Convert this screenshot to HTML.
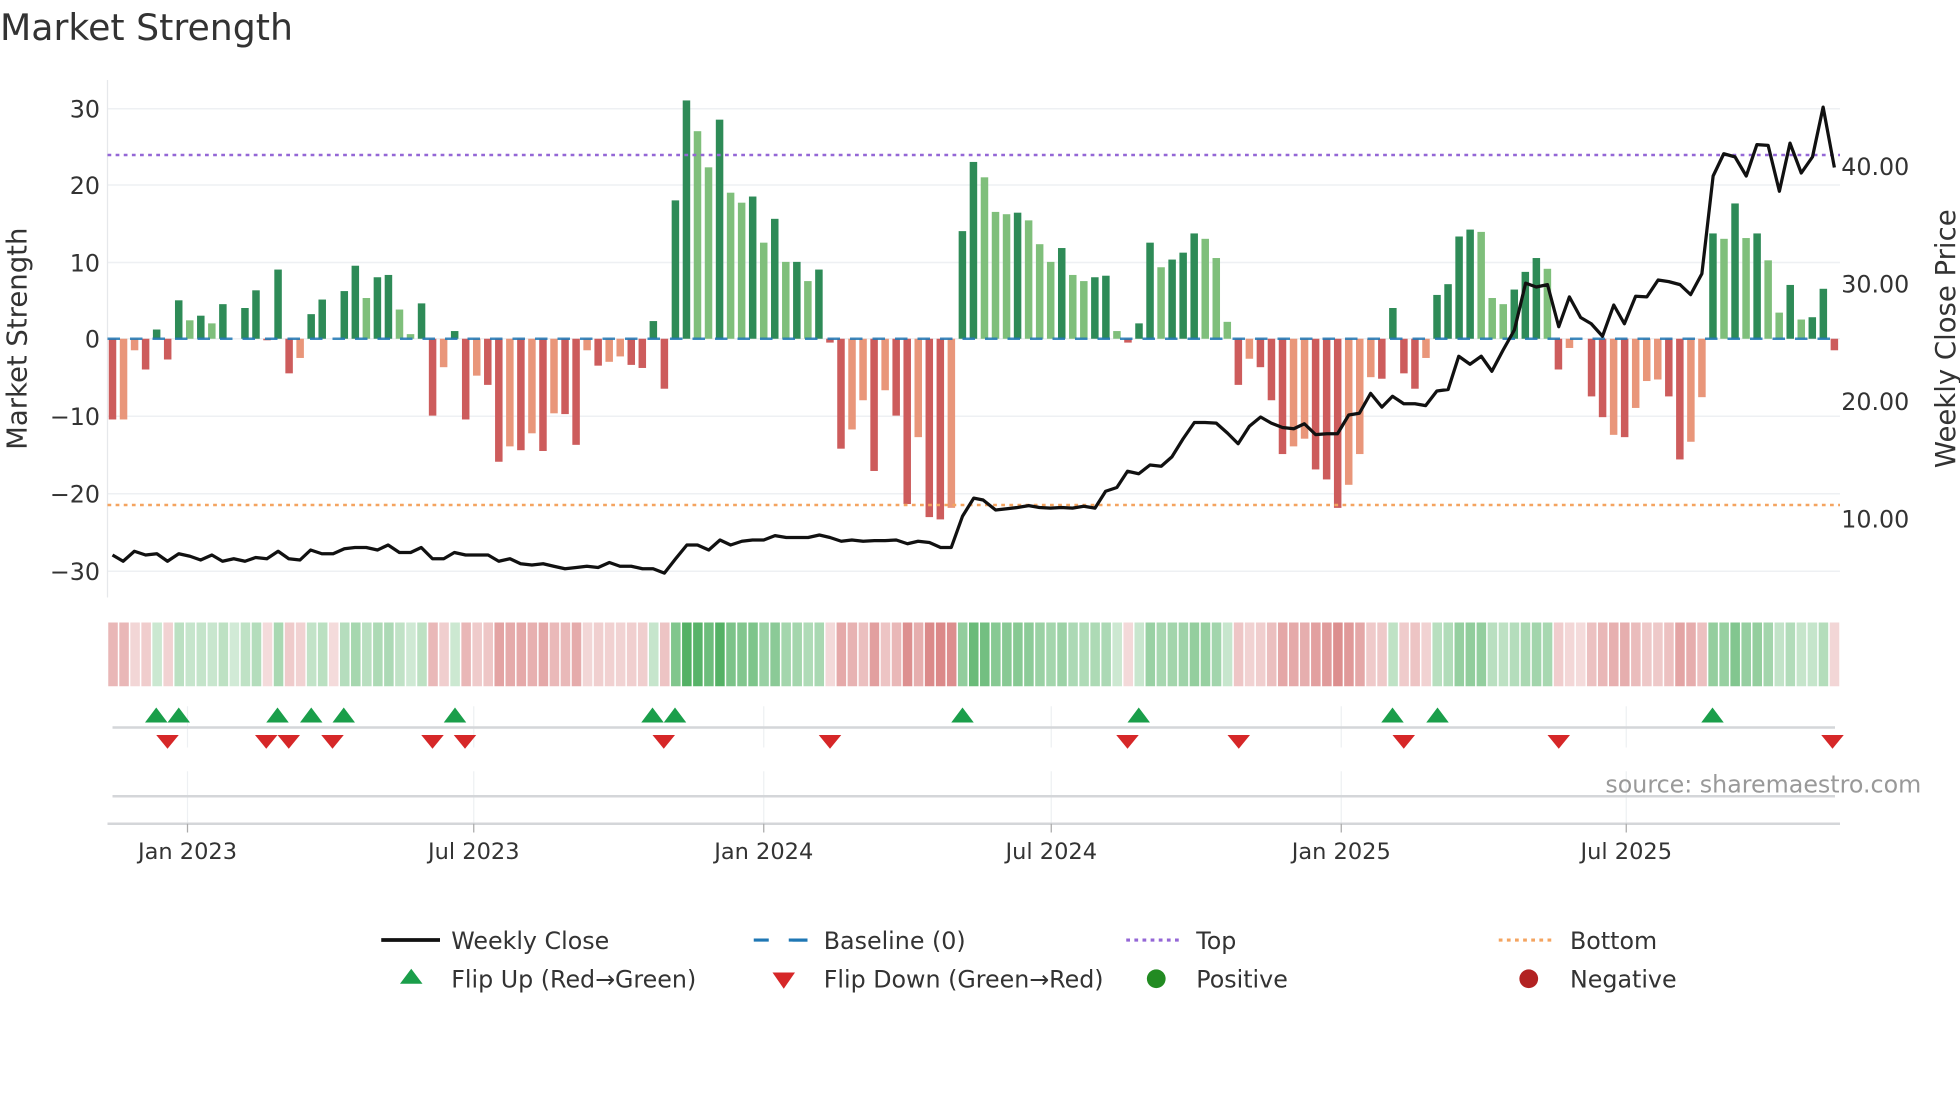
<!DOCTYPE html>
<html><head><meta charset="utf-8"><style>
html,body{margin:0;padding:0;background:#fff;width:1960px;height:1102px;overflow:hidden}
svg{display:block}
text{font-family:"DejaVu Sans","Liberation Sans",sans-serif;fill:#333}
</style></head><body>
<svg id="s" width="1960" height="1102" viewBox="0 0 1568 881.6" xmlns="http://www.w3.org/2000/svg">
<text x="0" y="32" font-size="29">Market Strength</text>
<g stroke="#eef0f3" stroke-width="1.2">
<line x1="86" x2="1472" y1="87" y2="87"/><line x1="86" x2="1472" y1="148" y2="148"/><line x1="86" x2="1472" y1="210" y2="210"/><line x1="86" x2="1472" y1="271" y2="271"/><line x1="86" x2="1472" y1="333" y2="333"/><line x1="86" x2="1472" y1="395" y2="395"/><line x1="86" x2="1472" y1="457" y2="457"/>
</g>
<line x1="86" x2="86" y1="64" y2="478" stroke="#e6e8eb" stroke-width="1"/>
<g font-size="19" text-anchor="end">
<text x="80" y="94">30</text><text x="80" y="155">20</text><text x="80" y="217">10</text><text x="80" y="278">0</text><text x="80" y="340">−10</text><text x="80" y="402">−20</text><text x="80" y="464">−30</text>
</g>
<g font-size="19">
<text x="1473" y="140">40.00</text><text x="1473" y="234">30.00</text><text x="1473" y="328">20.00</text><text x="1473" y="422">10.00</text>
</g>
<text font-size="22" transform="translate(21,271) rotate(-90)" text-anchor="middle">Market Strength</text>
<text font-size="22" transform="translate(1564,271) rotate(-90)" text-anchor="middle">Weekly Close Price</text>
<g id="bars"></g>
<line x1="86" x2="1472" y1="271" y2="271" stroke="#1f77b4" stroke-width="2" stroke-dasharray="10,8" opacity="0.85" id="base"/>
<line x1="86" x2="1472" y1="124" y2="124" stroke="#9467d6" stroke-width="2" stroke-dasharray="3,3.5"/>
<line x1="86" x2="1472" y1="404" y2="404" stroke="#f4a460" stroke-width="2" stroke-dasharray="3,3.5"/>
<polyline id="price" fill="none" stroke="#111" stroke-width="2.6" stroke-linejoin="round"/>
<g id="strip"></g>
<g stroke="#eef0f3" stroke-width="1">
<line x1="150" x2="150" y1="565" y2="598"/><line x1="379" x2="379" y1="565" y2="598"/><line x1="611" x2="611" y1="565" y2="598"/><line x1="841" x2="841" y1="565" y2="598"/><line x1="1073" x2="1073" y1="565" y2="598"/><line x1="1301" x2="1301" y1="565" y2="598"/>
<line x1="150" x2="150" y1="617" y2="659"/><line x1="379" x2="379" y1="617" y2="659"/><line x1="611" x2="611" y1="617" y2="659"/><line x1="841" x2="841" y1="617" y2="659"/><line x1="1073" x2="1073" y1="617" y2="659"/><line x1="1301" x2="1301" y1="617" y2="659"/>
</g>
<line x1="90" x2="1468" y1="582" y2="582" stroke="#d4d6d9" stroke-width="2"/>
<line x1="90" x2="1468" y1="637" y2="637" stroke="#d4d6d9" stroke-width="2"/>
<line x1="86" x2="1472" y1="659" y2="659" stroke="#d4d6d9" stroke-width="2"/>
<g stroke="#aaa" stroke-width="1">
<line x1="150" x2="150" y1="659" y2="666"/><line x1="379" x2="379" y1="659" y2="666"/><line x1="611" x2="611" y1="659" y2="666"/><line x1="841" x2="841" y1="659" y2="666"/><line x1="1073" x2="1073" y1="659" y2="666"/><line x1="1301" x2="1301" y1="659" y2="666"/>
</g>
<g id="marks"></g>
<g font-size="18" text-anchor="middle">
<text x="150" y="687">Jan 2023</text><text x="379" y="687">Jul 2023</text><text x="611" y="687">Jan 2024</text><text x="841" y="687">Jul 2024</text><text x="1073" y="687">Jan 2025</text><text x="1301" y="687">Jul 2025</text>
</g>
<text x="1537" y="634" font-size="19" text-anchor="end" style="fill:#999">source: sharemaestro.com</text>
<g font-size="19">
<line x1="305" x2="352" y1="752" y2="752" stroke="#111" stroke-width="3"/><text x="361" y="759">Weekly Close</text>
<line x1="603" x2="646" y1="752" y2="752" stroke="#1f77b4" stroke-width="2.5" stroke-dasharray="12,19"/><line x1="631" x2="646" y1="752" y2="752" stroke="#1f77b4" stroke-width="2.5"/><text x="659" y="759">Baseline (0)</text>
<line x1="901" x2="945" y1="752" y2="752" stroke="#9467d6" stroke-width="2.5" stroke-dasharray="3,3.5"/><text x="957" y="759">Top</text>
<line x1="1199" x2="1243" y1="752" y2="752" stroke="#f4a460" stroke-width="2.5" stroke-dasharray="3,3.5"/><text x="1256" y="759">Bottom</text>
<polygon points="320,787 329,775 338,787" fill="#1a9e4a"/><text x="361" y="790">Flip Up (Red→Green)</text>
<polygon points="618,778 636,778 627,791" fill="#d62728"/><text x="659" y="790">Flip Down (Green→Red)</text>
<circle cx="925" cy="783" r="7.5" fill="#228b22"/><text x="957" y="790">Positive</text>
<circle cx="1223" cy="783" r="7.5" fill="#b22222"/><text x="1256" y="790">Negative</text>
</g>
</svg>
<script>
var V=[[-10.5,1],[-10.5,0],[-1.5,0],[-4,1],[1.2,1],[-2.7,1],[5,1],[2.4,0],[3,1],[2,0],[4.5,1],[0,1],[4,1],[6.3,1],[-0.2,1],[9,1],[-4.5,1],[-2.5,0],[3.2,1],[5.1,1],[0,1],[6.2,1],[9.5,1],[5.3,0],[8,1],[8.3,1],[3.8,0],[0.6,0],[4.6,1],[-10,1],[-3.7,0],[1,1],[-10.5,1],[-4.8,0],[-6,1],[-16,1],[-14,0],[-14.5,1],[-12.3,0],[-14.6,1],[-9.7,0],[-9.8,1],[-13.8,1],[-1.5,0],[-3.5,1],[-3,0],[-2.3,0],[-3.4,1],[-3.8,1],[2.3,1],[-6.5,1],[18,1],[31,1],[27,0],[22.3,0],[28.5,1],[19,0],[17.7,0],[18.5,1],[12.5,0],[15.6,1],[10,0],[10,1],[7.5,0],[9,1],[-0.5,1],[-14.3,1],[-11.8,0],[-8,0],[-17.2,1],[-6.7,0],[-10,1],[-21.5,1],[-12.8,0],[-23.2,1],[-23.5,1],[-22,0],[14,1],[23,1],
[21,0],[16.5,0],[16.2,0],[16.4,1],[15.4,0],[12.3,0],[10,0],[11.8,1],[8.3,0],[7.5,0],[8,1],[8.2,1],[1,0],[-0.5,1],[2,1],[12.5,1],[9.3,0],[10.3,1],[11.2,1],[13.7,1],[13,0],[10.5,0],[2.2,0],[-6,1],[-2.6,0],[-3.7,1],[-8,1],[-15,1],[-14,0],[-13,0],[-17,1],[-18.3,1],[-22,1],[-19,0],[-15,0],[-5,0],[-5.2,1],[4,1],[-4.5,1],[-6.5,1],[-2.5,0],[5.7,1],[7.1,1],[13.3,1],[14.2,1],[13.9,0],[5.3,0],[4.5,0],[6.4,1],[8.7,1],[10.5,1],[9.1,0],[-4,1],[-1.2,0],[0,1],[-7.5,1],[-10.2,1],[-12.5,0],[-12.8,1],[-9,0],[-5.5,0],[-5.3,0],[-7.5,1],[-15.7,1],[-13.4,0],[-7.6,0],[13.7,1],[13,0],[17.6,1],[13.1,0],[13.7,1],[10.2,0],[3.4,0],[7,1],[2.5,0],[2.8,1],[6.5,1],[-1.5,1]];
var P=[[90,444],[98.5,449],[107.5,441],[116.5,444],[125.5,443],[134,449],[143,443],[152,445],[160.5,448],[169.5,444],[178,449],[187,447],[196,449],[204.5,446],[213.5,447],[222.5,441],[231,447],[240,448],[248.5,440],[257.5,443],[266.5,443],[275.5,439],[284,438],[293,438],[302,440],[310.5,436],[319.5,442],[328.5,442],[337,438],[346,447],[355,447],[363.5,442],[372.5,444],[381.5,444],[390.5,444],[399,449],[408,447],[416.5,451],[425.5,452],[434.5,451],[443,453],[452,455],[461,454],[469.5,453],[478.5,454],[487.5,450],[496,453],[505,453],[514,455],[522.5,455],[531.5,458.5],[540.5,447],[549.5,436],[558,436],[567,440],[576,432],[584.5,436],[593.5,433],[602,432],[611,432],[620,428.5],[629,430],[637.5,430],[646.5,430],[655.5,428],[664,430],[673,433],[681.5,432],[690.5,433],[699.5,432.5],[708,432.5],[717,432],[726,435],[734.5,433],[743.5,434],[752.5,438],[761,438],[770,413],[779,398.5],[786.5,400],[796.5,408],[805.5,407],[814,406],[823,404.5],[831.5,406],[840.5,406.5],[849,406],[858,406.5],[867,405],[876,406.5],[884.5,393],[893.5,390],[902,377],[911,379],[920,372],[929,373],[937.5,365.5],[946.5,351],[955.5,338],[964,338],[973,338.5],[982,346.5],[990.5,355],[999.5,341],[1008.5,333.6],[1017,338.5],[1026,342],[1035,343],[1043.5,339],[1052.5,347.7],[1061.5,347],[1070,347],[1079,332],[1087.5,330.6],[1096.5,314.7],[1105.5,325.7],[1114,317],[1123,323],[1132,323],[1140.5,324.5],[1149.5,312.8],[1158.5,311.6],[1167,285],[1176,291.4],[1185,285],[1193.5,297],[1202.5,280],[1211.5,264],[1220.5,226.5],[1229,229.6],[1238,227.7],[1247,261.4],[1255.5,237.5],[1264.5,254],[1273,259],[1282,269],[1291,244],[1299.5,259],[1308.5,237],[1317.5,237.5],[1326.5,224],[1335,225.3],[1344,227.7],[1352.5,235.7],[1361.5,219],[1370.5,140.8],[1379,123],[1388,125.5],[1397,140.8],[1405.5,115.7],[1414.5,116.3],[1423.5,153],[1432,114.5],[1441,138.4],[1450,125.5],[1458.5,85.7],[1467.5,134]];
var NS="http://www.w3.org/2000/svg";
function el(t,a,p){var e=document.createElementNS(NS,t);for(var k in a)e.setAttribute(k,a[k]);p.appendChild(e);return e;}
var bars=document.getElementById('bars'),strip=document.getElementById('strip'),marks=document.getElementById('marks');
var ups=[125,143,222,249,275,364,522,540,770,911,1114,1150,1370],dns=[134,213,231,266,346,372,531,664,902,991,1123,1247,1466];
var flips=[];ups.forEach(function(x){flips.push([x,1])});dns.forEach(function(x){flips.push([x,-1])});flips.sort(function(a,b){return a[0]-b[0]});
var N=V.length,dx=(1467.5-90)/(N-1),sw=(1472-86)/N;
for(var i=0;i<N;i++){var x=90+i*dx,v=V[i][0],d=V[i][1];
 if(v!=0){var y0=271,y1=271-v*6.15;var c=v>0?(d?'#2e8b57':'#7fbf7b'):(d?'#cd5c5c':'#e9967a');
 el('rect',{x:x-3,y:Math.min(y0,y1),width:6,height:Math.max(1,Math.abs(y1-y0)),fill:c},bars);}
 var st=-1;for(var j=0;j<flips.length;j++){if(flips[j][0]<=x+4)st=flips[j][1];}
 var a=0.22+0.6*Math.min(1,Math.abs(v)/28);
 var col=st>0?'rgba(46,160,67,'+a+')':'rgba(205,92,92,'+a+')';
 el('rect',{x:86+i*sw+0.6,y:498,width:sw-1.2,height:51,fill:col},strip);}
document.getElementById('price').setAttribute('points',P.map(function(p){return p.join(',')}).join(' '));
ups.forEach(function(x){el('polygon',{points:(x-9)+',578 '+x+',566 '+(x+9)+',578',fill:'#1a9e4a'},marks)});
dns.forEach(function(x){el('polygon',{points:(x-9)+',588 '+(x+9)+',588 '+x+',599',fill:'#d62728'},marks)});
</script>
</body></html>
